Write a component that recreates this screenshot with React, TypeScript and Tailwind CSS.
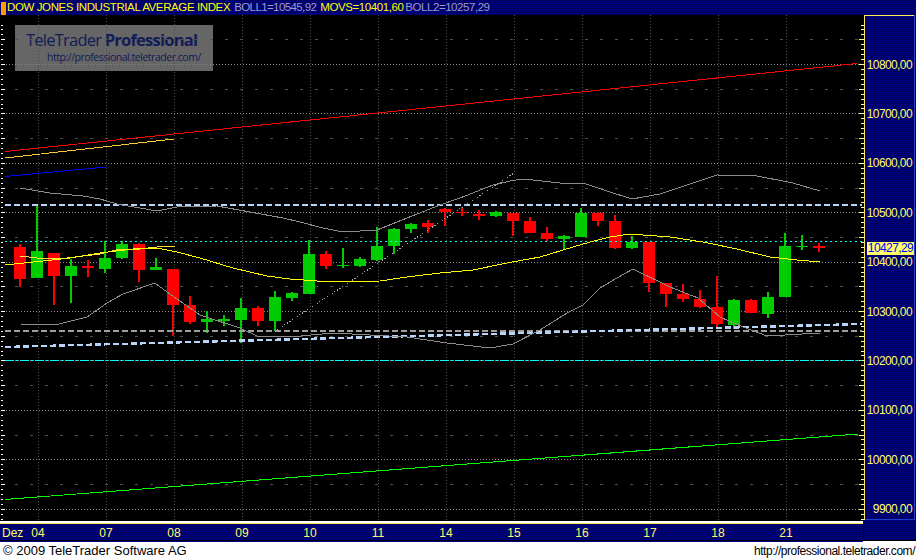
import React from 'react';

const NAVY = 'bg-[repeating-conic-gradient(#000088_0_25%,#000058_0_50%)] bg-[length:2px_2px]';

type Candle = [string, number, number, number, number];

// colour, wick top, wick bottom, body top, body bottom
const candles: Candle[] = [
  ['r', 244, 287, 247, 279], ['g', 204, 278, 251, 278], ['r', 253, 305, 253, 276], ['g', 259, 303, 266, 276],
  ['r', 260, 277, 266, 268], ['g', 241, 273, 258, 269], ['g', 241, 259, 244, 258], ['r', 243, 282, 244, 270],
  ['g', 258, 270, 267, 270], ['r', 269, 336, 269, 305], ['r', 296, 324, 305, 322], ['g', 311, 333, 319, 322],
  ['g', 315, 326, 319, 321], ['g', 298, 343, 308, 320], ['r', 306, 326, 308, 321], ['g', 291, 331, 297, 321],
  ['g', 292, 301, 293, 298], ['g', 240, 294, 254, 294], ['r', 251, 269, 254, 266], ['g', 248, 268, 265, 266],
  ['g', 257, 267, 259, 266], ['g', 227, 261, 246, 260], ['g', 228, 254, 229, 246], ['g', 223, 233, 224, 229],
  ['r', 220, 233, 223, 227], ['r', 208, 226, 209, 212], ['r', 207, 216, 212, 213], ['r', 210, 220, 214, 216],
  ['g', 211, 217, 212, 216], ['r', 213, 236, 213, 221], ['r', 217, 233, 221, 233], ['r', 227, 241, 233, 239],
  ['g', 235, 249, 236, 239], ['g', 208, 237, 213, 237], ['r', 212, 226, 213, 221], ['r', 215, 249, 221, 248],
  ['g', 236, 249, 242, 248], ['r', 242, 292, 242, 283], ['r', 283, 307, 283, 294], ['r', 284, 302, 294, 299],
  ['r', 290, 308, 299, 307], ['r', 276, 328, 307, 324], ['g', 299, 329, 300, 325], ['r', 299, 313, 300, 313],
  ['g', 292, 318, 297, 314], ['g', 233, 297, 246, 297], ['g', 235, 250, 246, 247], ['r', 243, 252, 246, 248],
];

const upper = '20,188 50,193 83,196 100,199 117,204 157,211 177,207 217,206 250,212 283,218 300,222 323,228 343,232 377,230 407,218 440,205 460,198 493,185 510,181 523,179 533,180 560,183 583,183 610,192 632,199 660,194 717,175 757,176 793,183 820,191';
const lower = '20,324 55,325 87,317 107,303 123,294 155,283 167,292 200,315 240,328 257,336 290,337 333,333 407,337 447,343 490,348 513,344 540,330 567,313 583,305 600,288 617,278 633,269 670,287 698,298 720,317 743,327 767,336 820,333';
const average = '5,265 43,261 70,258 100,253 133,249 157,248 177,252 200,258 233,268 267,276 290,279 317,281 337,282 380,281 407,277 440,273 473,270 507,263 540,257 573,247 590,242 610,237 630,234 670,237 703,242 737,249 770,257 797,260 820,262';
const shortAverage = '20,256 37,258 50,259 67,258 100,254 120,249 140,249 157,247 175,246';

const gridX = Array.from({ length: 12 }, (_, i) => 38 + 68 * i);
const gridY = Array.from({ length: 10 }, (_, i) => 64 + 49.4 * i);
const ticks = Array.from({ length: 101 }, (_, i) => 24.5 + 4.94 * i).filter((y) => y < 519);
const prices = ['10800,00', '10700,00', '10600,00', '10500,00', '10400,00', '10300,00', '10200,00', '10100,00', '10000,00', '9900,00'];
const days = ['07', '08', '09', '10', '11', '14', '15', '16', '17', '18', '21'];

function Chart() {
  return (
    <svg width="864" height="506" viewBox="0 15 864 506" shapeRendering="crispEdges" className="relative block" fill="none">
      {gridX.map((x) => (
        <line key={x} x1={x + 0.5} y1="15" x2={x + 0.5} y2="521" stroke="#4c4c4c" strokeDasharray="1 2" />
      ))}
      {gridY.map((y) => (
        <g key={y}>
          <line x1="3" y1={Math.round(y) + 0.5} x2="860" y2={Math.round(y) + 0.5} stroke="#8a8a8a" strokeDasharray="1 2" />
          <line x1="15" y1={Math.round(y - 24.7) + 0.5} x2="860" y2={Math.round(y - 24.7) + 0.5} stroke="#505050" strokeDasharray="3 12" />
        </g>
      ))}
      {ticks.map((y, i) => (
        <g key={y}>
          <rect x={1} y={Math.round(y)} width={(i + 2) % 5 === 0 ? 4 : 2} height="1" fill="#ffffff" />
          <rect x={(i + 2) % 5 === 0 ? 859 : 861} y={Math.round(y)} width={(i + 2) % 5 === 0 ? 5 : 3} height="1" fill="#ffffa0" />
        </g>
      ))}

      {candles.map(([c, wickTop, wickBottom, bodyTop, bodyBottom], i) => {
        const x = 20 + 17 * i;
        const fill = c === 'r' ? '#ff0000' : '#00cc00';
        return (
          <g key={i} fill={fill}>
            <rect x={x - 1} y={wickTop} width="2" height={wickBottom - wickTop} />
            <rect x={x - 6} y={bodyTop} width="12" height={Math.max(bodyBottom - bodyTop, 1)} />
          </g>
        );
      })}

      <line x1="5" y1="241.5" x2="862" y2="241.5" stroke="#00ffff" strokeDasharray="2 3" />
      <line x1="5" y1="360.5" x2="862" y2="360.5" stroke="#00ffff" strokeDasharray="9 2 2 2" />
      <line x1="5" y1="205" x2="862" y2="205" stroke="#b8d4f8" strokeWidth="2" strokeDasharray="6 3" />
      <line x1="5" y1="331" x2="862" y2="331" stroke="#a0a0a0" strokeWidth="2" strokeDasharray="6 3" />
      <line x1="5" y1="347" x2="862" y2="324" stroke="#b8d4f8" strokeWidth="2.4" strokeDasharray="6 3" />

      <line x1="5" y1="151.5" x2="857" y2="63.5" stroke="#ff0000" />
      <line x1="5" y1="158" x2="174" y2="139" stroke="#ffc830" />
      <line x1="5" y1="176.5" x2="106" y2="167" stroke="#0000ff" />
      <line x1="5" y1="499.5" x2="858" y2="434" stroke="#00ff00" />
      <line x1="277" y1="330" x2="514" y2="173" stroke="#a8a8a8" strokeDasharray="1 2" />
      <polyline points={upper} stroke="#8c8c8c" />
      <polyline points={lower} stroke="#8c8c8c" />
      <polyline points={shortAverage} stroke="#ffe040" />
      <polyline points={average} stroke="#ffff00" />
    </svg>
  );
}

function Logo() {
  return (
    <div className="absolute left-[15px] top-[10px] flex h-[46px] w-[198px] flex-col bg-[#666666] bg-[radial-gradient(#8a8a8a_0.6px,transparent_0.7px)] bg-[length:4px_4px] pl-[11px] pt-[4px] font-['Open_Sans',sans-serif] text-[#111c58]">
      <div className="text-[16.5px] leading-[22px] tracking-[-0.77px] whitespace-nowrap">
        TeleTrader <span className="font-bold">Professional</span>
      </div>
      <div className="pl-[21px] text-[10.5px] leading-[12px] tracking-[-0.47px] whitespace-nowrap">http://professional.teletrader.com/</div>
    </div>
  );
}

export default function App() {
  return (
    <div className="flex h-[558px] w-[916px] flex-col overflow-hidden bg-white font-['Liberation_Sans',sans-serif]">
      {/* Title bar */}
      <div className={`flex h-[15px] shrink-0 items-center whitespace-nowrap text-[11.5px] leading-[15px] ${NAVY}`}>
        <div className="mt-[2px] ml-[1px] h-[13px] w-[5px] bg-[#ff9900]" />
        <span className="ml-[1px] text-[#ffff00] tracking-[-0.39px]">DOW JONES INDUSTRIAL AVERAGE INDEX</span>
        <span className="ml-[4px] text-[#9c9cc8] tracking-[-0.6px]">BOLL1=10545,92</span>
        <span className="ml-[4px] text-[#ffff00] tracking-[-0.42px]">MOVS=10401,60</span>
        <span className="ml-[2px] text-[#9c9cc8] tracking-[-0.45px]">BOLL2=10257,29</span>
      </div>

      {/* Chart and price axis */}
      <div className="flex h-[506px] shrink-0 bg-black">
        <div className="relative h-[506px] w-[864px]">
          <Logo />
          <Chart />
        </div>
        <div className={`flex-1 ${NAVY}`}>
          <div className="flex h-[505px]">
            <div className="relative w-[50px] border-t border-l border-[#ffe860]">
              <div className="flex flex-col pt-[24px] pr-[2px] text-right text-[12px] tracking-[-0.6px] text-[#ffff66]">
                {prices.map((p) => (
                  <div key={p} className="flex h-[49.4px] items-center justify-end">{p}</div>
                ))}
              </div>
              <div className="absolute left-[2px] top-[226px] h-[13px] w-[47px] bg-[#ffff66] text-center text-[12px] leading-[13px] tracking-[-0.6px] text-[#0000ff]">10427,29</div>
              <div className="absolute bottom-0 left-0 h-px w-full bg-[#2040c0]" />
            </div>
            <div className="w-[2px] border-l border-[#2040c0]" />
          </div>
        </div>
      </div>

      {/* Time axis */}
      <div className="flex h-[19px] shrink-0 bg-black">
        <div className="flex w-[863px] flex-col">
          <div className="relative h-[2px] shrink-0 bg-white">
            {gridX.map((x) => (
              <div key={x} className="absolute bottom-0 h-px w-px bg-[#ffe860]" style={{ left: x }} />
            ))}
          </div>
          <div className={`flex flex-1 items-center border-t border-[#ffe860] pl-[2px] text-[12px] text-[#ffff66] ${NAVY}`}>
            <span className="w-[26px]">Dez</span>
            <span className="mr-[24px] w-[20px] text-center">04</span>
            {days.map((d) => (
              <span key={d} className="w-[68px] text-center">{d}</span>
            ))}
          </div>
        </div>
        <div className={`ml-px flex-1 ${NAVY}`} />
      </div>

      {/* Footer */}
      <div className="flex flex-1 items-center justify-between border-t border-black pl-[3px] pr-px text-black">
        <span className="text-[13px]">© 2009 TeleTrader Software AG</span>
        <span className="text-[12px] tracking-[-0.47px]">http://professional.teletrader.com/</span>
      </div>
    </div>
  );
}
